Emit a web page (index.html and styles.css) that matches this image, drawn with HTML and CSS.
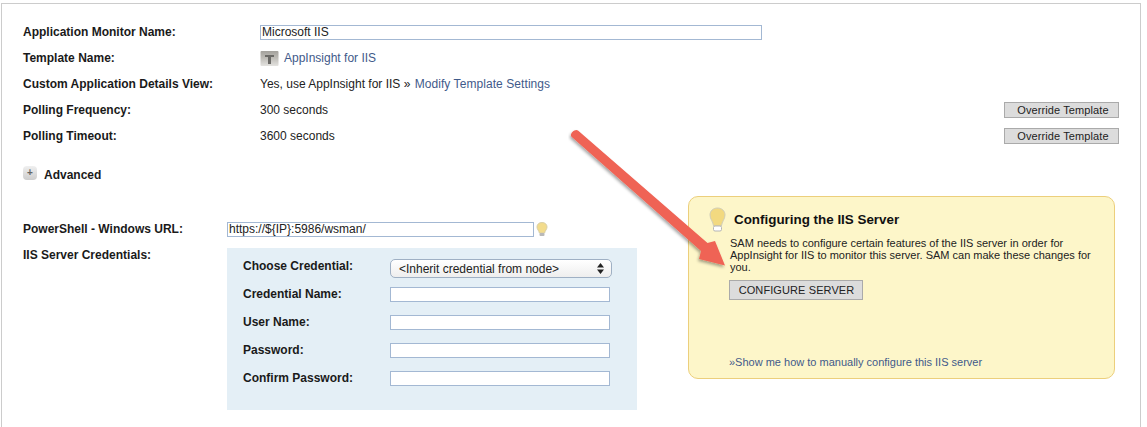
FILE: index.html
```html
<!DOCTYPE html>
<html lang="en">
<head>
    <meta charset="UTF-8">
    <meta name="viewport" content="width=device-width, initial-scale=1.0">
    <title>Edit Application Monitor</title>
    <link rel="stylesheet" href="styles.css">
</head>
<body>
    <div class="panel">
        <div class="settings">
            <div class="form-row">
                <label class="form-label">Application Monitor Name:</label>
                <input type="text" class="form-input name-input" value="Microsoft IIS">
            </div>
            <div class="form-row">
                <label class="form-label">Template Name:</label>
                <div class="form-value">
                    <svg class="template-icon" width="19" height="17" viewBox="0 0 19 17">
                        <defs>
                            <linearGradient id="templateFill" x1="0" y1="0" x2="0" y2="1">
                                <stop offset="0" stop-color="#a3a19c"/>
                                <stop offset="0.45" stop-color="#bdbbb6"/>
                                <stop offset="1" stop-color="#e4e3e0"/>
                            </linearGradient>
                        </defs>
                        <rect x="0.5" y="1" width="18" height="15" rx="1" fill="url(#templateFill)"/>
                        <path d="M5 5h9v2h-3v7H8V7H5z" fill="#6b6a67"/>
                    </svg>
                    <a href="#" class="link">AppInsight for IIS</a>
                </div>
            </div>
            <div class="form-row">
                <label class="form-label">Custom Application Details View:</label>
                <div class="form-value">Yes, use AppInsight for IIS &raquo; <a href="#" class="link modify-link">Modify Template Settings</a></div>
            </div>
            <div class="form-row">
                <label class="form-label">Polling Frequency:</label>
                <div class="form-value">300 seconds</div>
                <button type="button" class="grey-button override-button">Override Template</button>
            </div>
            <div class="form-row">
                <label class="form-label">Polling Timeout:</label>
                <div class="form-value">3600 seconds</div>
                <button type="button" class="grey-button override-button">Override Template</button>
            </div>
        </div>

        <div class="advanced">
            <span class="expand-icon">+</span>
            <span class="advanced-label">Advanced</span>
        </div>

        <div class="lower">
            <div class="lower-form">
                <div class="url-row">
                    <label class="form-label url-label">PowerShell - Windows URL:</label>
                    <input type="text" class="form-input url-input" value="https://${IP}:5986/wsman/">
                    <svg class="hint-bulb" width="12" height="15" viewBox="0 0 12 15">
                        <path d="M6 .5C2.800.5 1 2.600 1 5c0 2.400 1.900 3.400 2.400 6h5.200C9.100 8.400 11 7.400 11 5c0-2.400-1.800-4.500-5-4.500z" fill="#f3dc8c" stroke="#d9cfa6"/>
                        <rect x="3.500" y="11" width="5" height="3" rx="1" fill="#b9b9b9"/>
                    </svg>
                </div>
                <div class="cred-row">
                    <label class="form-label cred-label">IIS Server Credentials:</label>
                    <div class="cred-box">
                        <div class="cred-line cred-line-select">
                            <label class="form-label">Choose Credential:</label>
                            <div class="cred-select">
                                <span>&lt;Inherit credential from node&gt;</span>
                                <svg width="7" height="11" viewBox="0 0 7 11"><path d="M3.500 0L7 4.500H0zM3.500 11L0 6.500h7z" fill="#222"/></svg>
                            </div>
                        </div>
                        <div class="cred-line">
                            <label class="form-label">Credential Name:</label>
                            <input type="text" class="form-input cred-input">
                        </div>
                        <div class="cred-line">
                            <label class="form-label">User Name:</label>
                            <input type="text" class="form-input cred-input">
                        </div>
                        <div class="cred-line">
                            <label class="form-label">Password:</label>
                            <input type="password" class="form-input cred-input">
                        </div>
                        <div class="cred-line">
                            <label class="form-label">Confirm Password:</label>
                            <input type="password" class="form-input cred-input">
                        </div>
                    </div>
                </div>
            </div>

            <div class="note">
                <div class="note-header">
                    <svg class="note-bulb" width="17" height="25" viewBox="0 0 17 25">
                        <path d="M8.500 1C4 1 1 4.200 1 8c0 4 3 6.500 3.600 11h7.800C13 14.500 16 12 16 8c0-3.800-3-7-7.500-7z" fill="#f2d980" stroke="#d0cdb8"/>
                        <rect x="4.500" y="19" width="8" height="5" rx="1.500" fill="#fff" stroke="#b5b5b5"/>
                    </svg>
                    <h2 class="note-title">Configuring the IIS Server</h2>
                </div>
                <p class="note-text">SAM needs to configure certain features of the IIS server in order for AppInsight for IIS to monitor this server. SAM can make these changes for you.</p>
                <button type="button" class="grey-button configure-button">CONFIGURE SERVER</button>
                <a href="#" class="link note-link">&raquo;Show me how to manually configure this IIS server</a>
            </div>
        </div>

        <!-- annotation drawn on top of the screenshot -->
        <svg class="arrow" width="170" height="150" viewBox="0 0 170 150">
            <defs>
                <filter id="arrowShadow" x="-10%" y="-10%" width="120%" height="120%">
                    <feDropShadow dx="-1" dy="2" stdDeviation="1.500" flood-color="#000" flood-opacity="0.35"/>
                </filter>
            </defs>
            <path d="M10 3.500L139.500 116L147 114L157 138.500L131 132L133 124L3.500 9.800C1 7 7 1 10 3.500z" fill="#ef6354" filter="url(#arrowShadow)"/>
        </svg>
    </div>
</body>
</html>
```

FILE: styles.css
```css
* {
    margin: 0;
    padding: 0;
    box-sizing: border-box;
}

body {
    font-family: "Liberation Sans", Arial, sans-serif;
    font-size: 12px;
    color: #222;
    background: white;
    height: 427px;
    overflow: hidden;
    padding: 3px 6px 0 1px;
}

.panel {
    position: relative;
    height: 430px;
    border: 1px solid #ccc;
    border-bottom: none;
    padding: 15px 21px 0 21px;
}

.settings {
    display: flex;
    flex-direction: column;
}

.form-row {
    display: flex;
    align-items: center;
    height: 26px;
}

.form-row .form-label {
    width: 237px;
    flex-shrink: 0;
}

.form-label {
    font-weight: bold;
    color: #1a1a1a;
}

.form-value {
    flex: 1;
    display: flex;
    align-items: center;
    white-space: pre;
}

.form-input {
    height: 15px;
    border: 1px solid #a3b8d3;
    background: white;
    font-family: inherit;
    font-size: 12px;
    color: #222;
    padding: 0 1px;
    border-radius: 0;
    outline: none;
}

.name-input {
    width: 502px;
}

.link {
    color: #3f5a8a;
    text-decoration: none;
}

.modify-link {
    margin-left: 1px;
    letter-spacing: 0.07px;
}

.template-icon {
    margin-right: 5px;
}

.grey-button {
    background: #dcdcdc;
    border: 1px solid #aaa;
    font-family: inherit;
    font-size: 11px;
    color: #222;
}

.override-button {
    width: 115px;
    height: 16px;
    padding-left: 3px;
    font-size: 11px;
    line-height: 14px;
    letter-spacing: 0.1px;
}

.advanced {
    display: flex;
    align-items: center;
    margin-top: 16px;
    height: 20px;
}

.expand-icon {
    width: 14px;
    height: 14px;
    margin-right: 7px;
    margin-bottom: 5px;
    border-radius: 4px;
    background: linear-gradient(#f0f0f0, #cdcdcd);
    color: #666;
    font-size: 10px;
    font-weight: bold;
    line-height: 13px;
    text-align: center;
}

.advanced-label {
    font-weight: bold;
    color: #1a1a1a;
}

.lower {
    display: flex;
    align-items: flex-start;
    margin-top: 11px;
}

.lower-form {
    width: 665px;
    flex-shrink: 0;
    padding-top: 20px;
}

.url-row {
    display: flex;
    align-items: center;
    height: 26px;
    margin-bottom: 6px;
}

.url-label {
    width: 204px;
    flex-shrink: 0;
}

.url-input {
    width: 307px;
}

.hint-bulb {
    margin-left: 2px;
}

.cred-row {
    display: flex;
    align-items: flex-start;
}

.cred-label {
    width: 204px;
    flex-shrink: 0;
}

.cred-box {
    width: 410px;
    height: 162px;
    background: #e4eff6;
    padding: 9px 16px 0;
}

.cred-line {
    display: flex;
    align-items: center;
    height: 28px;
}

.cred-line .form-label {
    width: 147px;
    flex-shrink: 0;
}

.cred-line-select {
    height: 23px;
}

.cred-line-select .form-label {
    margin-top: -6px;
}

.cred-select {
    width: 222px;
    height: 19px;
    display: flex;
    align-items: center;
    justify-content: space-between;
    padding: 0 7px 0 8px;
    border: 1px solid #9fb0c4;
    border-radius: 5px;
    background: linear-gradient(#fff, #eee);
    color: #222;
}

.cred-input {
    width: 220px;
}

.note {
    width: 427px;
    height: 183px;
    display: flex;
    flex-direction: column;
    align-items: flex-start;
    background: #fdf6c9;
    border: 1px solid #eccf7c;
    border-radius: 10px;
    padding: 10px 22px 0 40px;
}

.note-header {
    display: flex;
    align-items: center;
    margin-left: -20px;
    height: 25px;
}

.note-bulb {
    margin-right: 8px;
}

.note-title {
    font-size: 13.4px;
    font-weight: bold;
    color: #111;
}

.note-text {
    font-size: 11px;
    line-height: 12px;
    margin-top: 5px;
    padding-left: 1px;
    color: #222;
}

.configure-button {
    width: 134px;
    height: 20px;
    margin-top: 7px;
    padding-left: 1px;
    font-size: 11px;
    letter-spacing: 0.1px;
}

.note-link {
    margin-top: 56px;
    font-size: 11px;
}

.arrow {
    position: absolute;
    left: 566px;
    top: 123px;
}
```
